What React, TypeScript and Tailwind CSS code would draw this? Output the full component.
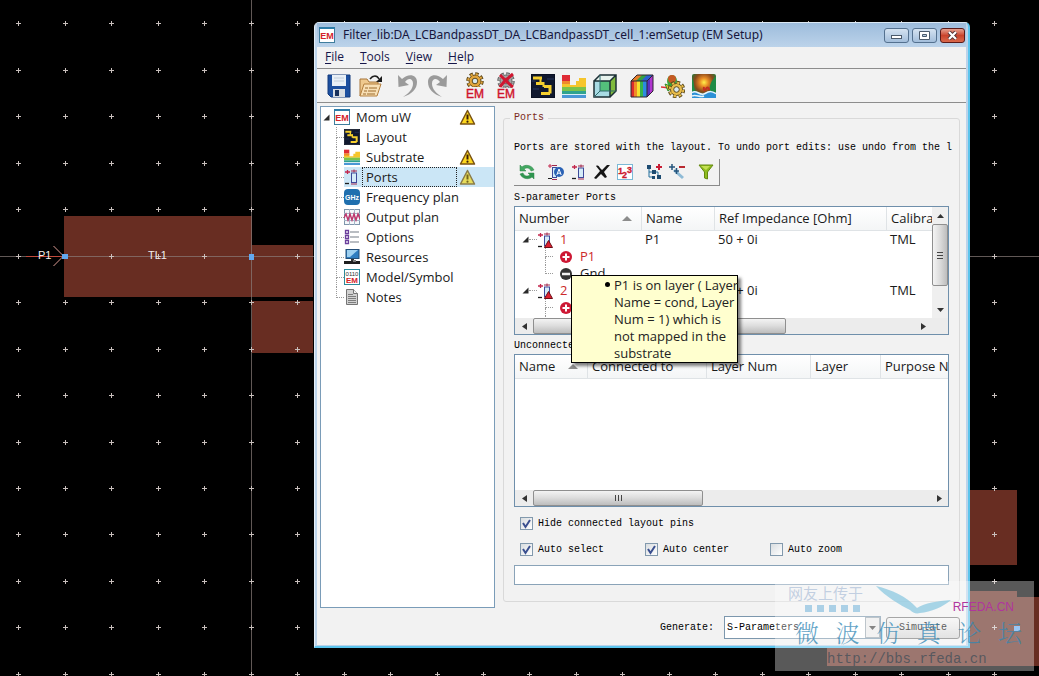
import React, { useState } from 'react';

type IconProps = { className?: string };

const GRID_X = Array.from({ length: 45 }, (_, i) => Math.round(18.2 + i * 46.48));
const GRID_Y = Array.from({ length: 30 }, (_, i) => Math.round(23.2 + i * 46.48));

function LayoutCanvas() {
  return (
    <svg className="absolute inset-0 h-full w-full" shapeRendering="crispEdges">
      <g fill="#682d22">
        <rect x="64" y="216" width="188" height="81" />
        <rect x="252" y="245" width="61" height="52" />
        <rect x="252" y="301" width="61" height="52" />
        <rect x="940" y="490" width="77" height="75" />
        <rect x="940" y="591" width="77" height="10" />
        <rect x="827" y="597" width="212" height="69" />
      </g>
      <g stroke="#8a7d7a" strokeOpacity="0.7">
        <line x1="0" y1="256.5" x2="100%" y2="256.5" />
        <line x1="251.5" y1="0" x2="251.5" y2="100%" />
      </g>
      <path
        d={GRID_Y.map((y) => GRID_X.map((x) => `M${x - 2} ${y}.5h5M${x}.5 ${y - 2}v5`).join('')).join('')}
        stroke="#c9c0bd"
        fill="none"
      />
      <path d="M26 256.5h37" stroke="#c04a3c" />
      <path d="M53.5 246l9 9M53.5 266l9-9" stroke="#dc9b93" fill="none" shapeRendering="auto" />
      <g fill="#62a8f0">
        <rect x="62" y="254" width="6" height="5" />
        <rect x="249" y="254" width="5" height="6" />
        <rect x="1014" y="626" width="6" height="5" />
      </g>
      <g fill="#f3eeee" fontFamily="Liberation Sans, sans-serif" fontSize="11">
        <text x="38" y="259">P1</text>
        <text x="148" y="259">TL1</text>
      </g>
    </svg>
  );
}

/* ---------- icons ---------- */

function EmBadge({ className }: IconProps) {
  return (
    <svg className={className} viewBox="0 0 16 16">
      <rect x="0.5" y="0.5" width="15" height="15" fill="#fff" stroke="#3f7d9d" />
      <rect x="0" y="0" width="16" height="2" fill="#2d7ca8" />
      <text x="8" y="12" fontSize="9" fontWeight="bold" textAnchor="middle" fill="#d3222a" fontFamily="Liberation Sans, sans-serif">EM</text>
    </svg>
  );
}

function SaveIcon({ className }: IconProps) {
  return (
    <svg className={className} viewBox="0 0 24 24">
      <path d="M1 1h22v22H4l-3-3z" fill="#1c4f9f" stroke="#123a7c" />
      <rect x="5" y="1" width="14" height="11" fill="#e9f0f7" />
      <path d="M7 4h10M7 7h10" stroke="#c2cedb" />
      <rect x="6" y="15" width="12" height="8" fill="#d8dde3" />
      <rect x="8" y="16" width="4" height="6" fill="#17305c" />
    </svg>
  );
}

function OpenIcon({ className }: IconProps) {
  return (
    <svg className={className} viewBox="0 0 24 24">
      <path d="M2 22V5h7l2 3h9v3" fill="#efc98e" stroke="#a8763a" />
      <path d="M2 22L6 10h17l-4 12z" fill="#f8dfb4" stroke="#b5803f" />
      <path d="M7 14h3m1 0h8M6 17h3m1 0h8M5 20h3m1 0h8" stroke="#9c6a2d" />
      <path d="M12 5c3-4 7-4 9 0" fill="none" stroke="#1d1d1d" strokeWidth="1.5" />
      <path d="M24 2v6h-6z" fill="#1d1d1d" />
    </svg>
  );
}

function UndoIcon({ className }: IconProps) {
  return (
    <svg className={className} viewBox="0 0 24 24">
      <path d="M3 1l0.500 12L14 11l-4-3c3-4.500 8-4 8 1.500 0 5.500-4 9.500-10 13.500 9-3 14-8 14-15C22 0 13-1 7 5z" fill="#9b9b9b" />
    </svg>
  );
}

function RedoIcon({ className }: IconProps) {
  return (
    <svg className={className} viewBox="0 0 24 24">
      <path d="M21 1l-0.500 12L10 11l4-3c-3-4.500-8-4-8 1.500 0 5.500 4 9.500 10 13.500C7 20 2 15 2 8 2 0 11-1 17 5z" fill="#9b9b9b" />
    </svg>
  );
}

function Gear({ cx, cy, fill, stroke, hub }: { cx: number; cy: number; fill: string; stroke: string; hub: string }) {
  return (
    <g>
      <circle cx={cx} cy={cy} r="6.8" fill="none" stroke={stroke} strokeWidth="4" strokeDasharray="3.2 2.14" />
      <circle cx={cx} cy={cy} r="6" fill={fill} stroke={stroke} />
      <circle cx={cx} cy={cy} r="6.8" fill="none" stroke={fill} strokeWidth="2" strokeDasharray="2.2 3.14" strokeDashoffset="-0.5" />
      <circle cx={cx} cy={cy} r="2.8" fill={hub} stroke={stroke} />
    </g>
  );
}

function SimulateEmIcon({ className }: IconProps) {
  return (
    <svg className={`${className} overflow-visible`} viewBox="0 0 24 24">
      <Gear cx={12} cy={7} fill="#e3a63c" stroke="#5f4a1c" hub="#d5e6ee" />
      <rect x="2" y="13" width="20" height="12" fill="#f2f2f2" />
      <text x="12" y="24" fontSize="12" textAnchor="middle" fill="#d0142c" stroke="#d0142c" strokeWidth="0.4" fontFamily="Liberation Sans, sans-serif">EM</text>
    </svg>
  );
}

function StopEmIcon({ className }: IconProps) {
  return (
    <svg className={`${className} overflow-visible`} viewBox="0 0 24 24">
      <Gear cx={12} cy={7} fill="#a5a5a5" stroke="#666" hub="#ddd" />
      <rect x="2" y="14" width="20" height="11" fill="#f2f2f2" />
      <path d="M6 1c4 4 8 8 13 12M19 0C14 4 9 8 6 13" stroke="#cf1730" strokeWidth="3" fill="none" />
      <text x="12" y="24" fontSize="12" textAnchor="middle" fill="#d0142c" stroke="#d0142c" strokeWidth="0.4" fontFamily="Liberation Sans, sans-serif">EM</text>
    </svg>
  );
}

function LayoutIcon({ className }: IconProps) {
  return (
    <svg className={className} viewBox="0 0 24 24">
      <rect x="0.5" y="0.5" width="23" height="23" fill="#10182e" stroke="#0a1022" />
      <path d="M2 4h9M5 9.500h8M13 12.500h6v7M10 19.500h9" fill="none" stroke="#f5cf2e" strokeWidth="3" />
      <path d="M9.500 4v5M12.500 8v5" fill="none" stroke="#f5cf2e" strokeWidth="2" />
      <path d="M0.500 7h4M16 5h7M2 15h6" stroke="#27365f" />
    </svg>
  );
}

function SubstrateIcon({ className }: IconProps) {
  return (
    <svg className={className} viewBox="0 0 24 24">
      <rect x="0" y="1" width="8" height="6" fill="#df2b35" />
      <path d="M0 7h8v4h6V7h3V4h7v9H0z" fill="#f6c52b" />
      <path d="M0 7h8v3H0z" fill="#f08a2c" />
      <rect x="0" y="13" width="24" height="4" fill="#7cc24a" />
      <rect x="0" y="17" width="24" height="3" fill="#2fa38f" />
      <rect x="0" y="20" width="24" height="1" fill="#dceef6" />
      <rect x="0" y="21" width="24" height="3" fill="#4a97d6" />
    </svg>
  );
}

function CubeIcon({ className }: IconProps) {
  return (
    <svg className={className} viewBox="0 0 24 24">
      <path d="M1 7l6-6h16l-6 6z" fill="#e7f3ee" />
      <path d="M17 7l6-6v16l-6 6z" fill="#7fba3c" />
      <rect x="1" y="7" width="16" height="16" fill="#a8dbe4" />
      <rect x="7" y="7" width="10" height="10" fill="#54c07b" />
      <path d="M1 7h16v16H1zM1 7l6-6h16v16l-6 6M17 7l6-6" fill="none" stroke="#1c2f35" strokeWidth="1.500" />
      <path d="M7 1v16h16M7 17l-6 6" fill="none" stroke="#2f6a6c" />
    </svg>
  );
}

function RainbowCubeIcon({ className }: IconProps) {
  return (
    <svg className={className} viewBox="0 0 24 24">
      <path d="M1 7l6-6h16l-6 6z" fill="#e57e29" />
      <path d="M6 7l6-6h11l-6 6z" fill="#34a042" />
      <path d="M11 7l6-6h6l-6 6z" fill="#2c5fd0" />
      <rect x="1" y="7" width="4" height="16" fill="#de2c2c" />
      <rect x="4" y="7" width="3" height="16" fill="#f18b27" />
      <rect x="7" y="7" width="3" height="16" fill="#f4e22e" />
      <rect x="10" y="7" width="3" height="16" fill="#35b34a" />
      <rect x="13" y="7" width="4" height="16" fill="#2c8ae0" />
      <path d="M17 7l6-6v16l-6 6z" fill="#5a2fc0" />
      <path d="M20 4l3-3v16l-3 3z" fill="#b036cf" />
      <path d="M1 7h16v16H1zM1 7l6-6h16v16l-6 6M17 7l6-6" fill="none" stroke="#2c2430" />
    </svg>
  );
}

function FarFieldIcon({ className }: IconProps) {
  return (
    <svg className={className} viewBox="0 0 24 24">
      <path d="M0 13l9 1" stroke="#d93232" strokeWidth="1.500" />
      <ellipse cx="11" cy="7" rx="5" ry="6" fill="#3aa63a" />
      <ellipse cx="11" cy="5" rx="4" ry="4" fill="#c55a23" />
      <path d="M4 10l8 3-5 4z" fill="#e0c62c" stroke="#2d8c2f" />
      <Gear cx={15.5} cy={15.5} fill="#e9bd4b" stroke="#5d4b1c" hub="#d8e8ef" />
    </svg>
  );
}

function FieldPlotIcon({ className }: IconProps) {
  return (
    <svg className={className} viewBox="0 0 24 24">
      <defs>
        <radialGradient id="field" cx="0.500" cy="0.350" r="0.600">
          <stop offset="0" stopColor="#fff04a" />
          <stop offset="0.300" stopColor="#e88b25" />
          <stop offset="0.650" stopColor="#8c4a1c" />
          <stop offset="1" stopColor="#217a3a" />
        </radialGradient>
      </defs>
      <rect width="24" height="24" rx="2" fill="url(#field)" />
      <path d="M0 4c3 5 1 9 4 14H0zM24 2c-5 5-7 9-6 16h6z" fill="#1f8b46" />
      <path d="M12 13c-1 3 1 4 2 2s3-2 3 1" stroke="#c32d22" strokeWidth="2" fill="none" />
      <path d="M0 18c5-3 8 4 13 1s7-2 11 0v5H0z" fill="#2c90d6" />
      <path d="M0 18.500c5-3 8 4 13 1s7-2 11 0M0 22c4-2 8 2 12 0" stroke="#e8f5fc" strokeWidth="1.500" fill="none" />
    </svg>
  );
}

function WarningIcon({ className, dim }: IconProps & { dim?: boolean }) {
  return (
    <svg className={className} viewBox="0 0 17 17">
      <path d="M8.500 1.500L15.500 15h-14z" fill={dim ? '#e6dc5c' : '#fcd720'} stroke={dim ? '#8a7c4a' : '#7a5313'} strokeWidth="1.500" strokeLinejoin="round" />
      <path d="M8.500 5.500v5" stroke={dim ? '#74661d' : '#3b1e05'} strokeWidth="2" />
      <circle cx="8.500" cy="12.700" r="1.100" fill={dim ? '#74661d' : '#3b1e05'} />
    </svg>
  );
}

function PortIcon({ className, alert }: IconProps & { alert?: boolean }) {
  return (
    <svg className={className} viewBox="0 0 16 16">
      <path d="M1 3h5M3.500 1v4" stroke="#c3274d" strokeWidth="1.300" />
      <path d="M1 14.500h4" stroke="#1d1d1d" strokeWidth="1.300" />
      <rect x="7.500" y="4" width="5" height="9.500" fill="#d5ecf8" stroke="#3f4a9a" />
      <path d="M7 2h6M10 0.500v3M7 15h6" stroke="#a1284c" />
      {alert && <path d="M11.500 8.500l4 7h-8z" fill="#df1f2f" stroke="#6b0f18" />}
    </svg>
  );
}

function GhzIcon({ className }: IconProps) {
  return (
    <svg className={className} viewBox="0 0 16 16">
      <rect width="16" height="16" rx="4" fill="#1f6fae" />
      <text x="8" y="11" fontSize="7" fontWeight="bold" textAnchor="middle" fill="#fff" fontFamily="Liberation Sans, sans-serif">GHz</text>
    </svg>
  );
}

function OutputPlanIcon({ className }: IconProps) {
  return (
    <svg className={className} viewBox="0 0 16 16">
      <rect x="0.500" y="0.500" width="15" height="15" fill="#f4f8fb" stroke="#7f95ab" />
      <path d="M5.500 0v16M10.500 0v16M0 4.500h16M0 11.500h16" stroke="#a4b5c6" />
      <path d="M0 9l2-4 2 6 2-6 2 6 2-6 2 6 2-6 2 5" fill="none" stroke="#c0356c" strokeWidth="1.400" />
    </svg>
  );
}

function OptionsIcon({ className }: IconProps) {
  return (
    <svg className={className} viewBox="0 0 16 16">
      <path d="M1.500 1.500h3v3h-3zM1.500 6.500h3v3h-3zM1.500 11.500h3v3h-3z" fill="#fff" stroke="#6b3f9c" strokeWidth="1.300" />
      <path d="M6 3h9M6 8h9M6 13h9" stroke="#a3a8ae" strokeWidth="1.300" />
    </svg>
  );
}

function ResourcesIcon({ className }: IconProps) {
  return (
    <svg className={className} viewBox="0 0 16 16">
      <rect x="2" y="0.500" width="13" height="9" fill="#2f7dc0" stroke="#234e78" />
      <path d="M3 1h11L6 8H3z" fill="#9fd0f0" />
      <path d="M7 10h3v2H7z" fill="#333" />
      <rect x="0" y="12" width="16" height="3" fill="#1e1e1e" />
      <rect x="9" y="11" width="3" height="2" fill="#777" />
    </svg>
  );
}

function ModelIcon({ className }: IconProps) {
  return (
    <svg className={className} viewBox="0 0 16 16">
      <rect x="0.500" y="0.500" width="15" height="15" fill="#fff" stroke="#2c8a9c" />
      <text x="8" y="7" fontSize="6" textAnchor="middle" fill="#333" fontFamily="Liberation Sans, sans-serif">0110</text>
      <text x="8" y="14" fontSize="8" fontWeight="bold" textAnchor="middle" fill="#d3222a" fontFamily="Liberation Sans, sans-serif">EM</text>
    </svg>
  );
}

function NotesIcon({ className }: IconProps) {
  return (
    <svg className={className} viewBox="0 0 16 16">
      <path d="M2.500 0.500h7l4 4v11h-11z" fill="#d2d2d2" stroke="#757575" />
      <path d="M9.500 0.500v4h4" fill="#f4f4f4" stroke="#757575" />
      <path d="M4 5.500h5M4 7.500h8M4 9.500h8M4 11.500h8M4 13.500h8" stroke="#7d7d7d" />
    </svg>
  );
}

function RefreshIcon({ className }: IconProps) {
  return (
    <svg className={className} viewBox="0 0 16 16">
      <path d="M15 6C13 1 6 0 3 3L1 1v6h6L5 5c3-2 6-1 7 2z" fill="#43a862" stroke="#2c8447" strokeWidth="0.500" />
      <path d="M1 10c2 5 9 6 12 3l2 2V9H9l2 2c-3 2-6 1-7-2z" fill="#2f9650" stroke="#2c8447" strokeWidth="0.500" />
    </svg>
  );
}

function AutoPortIcon({ className }: IconProps) {
  return (
    <svg className={className} viewBox="0 0 16 16">
      <path d="M0 2h4M2 0v4" stroke="#c3274d" />
      <path d="M0 14.500h4" stroke="#222" />
      <rect x="4.500" y="3.500" width="4" height="10" fill="#d5ecf8" stroke="#3f4a9a" />
      <path d="M4 1.500h5M4 15.500h5" stroke="#a1284c" />
      <circle cx="11" cy="8" r="5" fill="#2a62b5" />
      <path d="M8.800 11L11 5l2.200 6M9.500 9.200h3" fill="none" stroke="#fff" />
    </svg>
  );
}

function DeleteIcon({ className }: IconProps) {
  return (
    <svg className={className} viewBox="0 0 16 16">
      <path d="M2 2c2-1 3 0 4 2l2 2 5-5 3 0-6 7 3 5-2 1-4-4-5 5-2-1 6-7z" fill="#151515" />
    </svg>
  );
}

function RenumberIcon({ className }: IconProps) {
  return (
    <svg className={className} viewBox="0 0 16 16">
      <rect x="0.500" y="0.500" width="15" height="15" fill="#fff" stroke="#7bb9d6" />
      <g fill="#cb1a2f" stroke="#cb1a2f" strokeWidth="0.300" fontSize="9" fontWeight="bold" fontFamily="Liberation Sans, sans-serif">
        <text x="1" y="10">1</text>
        <text x="5" y="14">2</text>
        <text x="10" y="9">3</text>
      </g>
    </svg>
  );
}

function AddNodeIcon({ className }: IconProps) {
  return (
    <svg className={className} viewBox="0 0 16 16">
      <path d="M3 3v10h4M3 8h4M9 8h3v5" fill="none" stroke="#236f9c" />
      <path d="M1 1h4v4H1zM6 6h4v4H6zM6 12h3v3H6zM11 11h4v4h-4z" fill="#1d4b71" />
      <path d="M10 3h6M13 0v6" stroke="#c81d35" strokeWidth="2" />
    </svg>
  );
}

function RemoveNodeIcon({ className }: IconProps) {
  return (
    <svg className={className} viewBox="0 0 16 16">
      <path d="M5 6l9 8" stroke="#8fbbd6" strokeWidth="3" />
      <path d="M0 3h6M3 0v6M5 7h5M7.500 4v6" stroke="#25547c" strokeWidth="1.500" />
      <path d="M10 3h6" stroke="#b92a30" strokeWidth="2" />
    </svg>
  );
}

function FilterIcon({ className }: IconProps) {
  return (
    <svg className={className} viewBox="0 0 16 16">
      <path d="M1 1h14L9.500 8v7l-3-1V8z" fill="#8fbc1f" stroke="#64890f" />
      <path d="M3 2h9L8 6z" fill="#c4e052" />
    </svg>
  );
}

function PlusBadge({ className }: IconProps) {
  return (
    <svg className={className} viewBox="0 0 12 12">
      <circle cx="6" cy="6" r="6" fill="#cd1834" />
      <path d="M2.500 6h7M6 2.500v7" stroke="#fff" strokeWidth="2" />
    </svg>
  );
}

function MinusBadge({ className }: IconProps) {
  return (
    <svg className={className} viewBox="0 0 12 12">
      <circle cx="6" cy="6" r="6" fill="#333" />
      <path d="M2 6h8" stroke="#f1f1f1" strokeWidth="2.500" />
    </svg>
  );
}

function Expander() {
  return (
    <svg className="h-[7px] w-[7px] shrink-0" viewBox="0 0 7 7">
      <path d="M6.500 0.500v6h-6z" fill="#2a2a2a" />
    </svg>
  );
}

function SortArrow() {
  return (
    <svg className="h-[5px] w-[10px]" viewBox="0 0 10 5">
      <path d="M0 5l5-5 5 5z" fill="#8c8c8c" />
    </svg>
  );
}

/* ---------- tree ---------- */

const TREE_ITEMS = [
  { label: 'Layout', Icon: LayoutIcon },
  { label: 'Substrate', Icon: SubstrateIcon, warning: true },
  { label: 'Ports', Icon: PortIcon, warning: true },
  { label: 'Frequency plan', Icon: GhzIcon },
  { label: 'Output plan', Icon: OutputPlanIcon },
  { label: 'Options', Icon: OptionsIcon },
  { label: 'Resources', Icon: ResourcesIcon },
  { label: 'Model/Symbol', Icon: ModelIcon },
  { label: 'Notes', Icon: NotesIcon },
];

function Branch({ last }: { last?: boolean }) {
  return (
    <span className="flex w-2 shrink-0 flex-col self-stretch">
      <span className="flex-1 border-b border-l border-dotted border-[#9a9a9a]" />
      <span className={last ? 'flex-1' : 'flex-1 border-l border-dotted border-[#9a9a9a]'} />
    </span>
  );
}

function SetupTree() {
  const [selected, setSelected] = useState('Ports');

  return (
    <nav className="w-[175px] shrink-0 border border-[#7a9cb8] bg-white text-[13px] leading-5 text-[#1a1a1a]">
      <div className="flex h-5 items-center pl-[2px]">
        <Expander />
        <EmBadge className="ml-1 h-4 w-4" />
        <span className="ml-[6px] flex-1">Mom uW</span>
        <WarningIcon className="mr-[18px] h-[17px] w-[17px]" />
      </div>
      <ul>
        {TREE_ITEMS.map(({ label, Icon, warning }, i) => {
          const active = label === selected;
          return (
            <li key={label} className="flex h-5 items-center pl-[15px]">
              <Branch last={i === TREE_ITEMS.length - 1} />
              <button
                type="button"
                onClick={() => setSelected(label)}
                className={`flex h-5 min-w-0 flex-1 items-center text-left ${active ? 'bg-[#cbe6f6]' : ''}`}
              >
                <Icon className="h-4 w-4 shrink-0" />
                <span
                  className={`ml-[2px] w-[95px] border px-[3px] leading-[18px] whitespace-nowrap ${
                    active ? 'border-dotted border-[#222]' : 'border-transparent'
                  }`}
                >
                  {label}
                </span>
                {warning && <WarningIcon dim={active} className="ml-[2px] h-[17px] w-[17px] shrink-0" />}
              </button>
            </li>
          );
        })}
      </ul>
    </nav>
  );
}

/* ---------- scroll bars ---------- */

function HScroll({ thumb }: { thumb: string }) {
  return (
    <div className="flex h-4 w-full items-stretch bg-[#ececec]">
      <button type="button" aria-label="Scroll left" className="flex w-[18px] items-center justify-center">
        <svg className="h-[7px] w-[5px]" viewBox="0 0 5 7"><path d="M5 0v7L0 3.500z" fill="#333" /></svg>
      </button>
      <div className="flex flex-1">
        <div className={`flex items-center justify-center gap-[2px] rounded-[2px] border border-[#8f8f8f] bg-linear-to-b from-[#f4f4f4] via-[#dcdcdc] to-[#bdbdbd] ${thumb}`}>
          <span className="h-[6px] w-px bg-[#444]" />
          <span className="h-[6px] w-px bg-[#444]" />
          <span className="h-[6px] w-px bg-[#444]" />
        </div>
      </div>
      <button type="button" aria-label="Scroll right" className="flex w-[18px] items-center justify-center">
        <svg className="h-[7px] w-[5px]" viewBox="0 0 5 7"><path d="M0 0v7l5-3.500z" fill="#333" /></svg>
      </button>
    </div>
  );
}

function VScroll() {
  return (
    <div className="flex w-4 shrink-0 flex-col bg-[#efefef]">
      <button type="button" aria-label="Scroll up" className="flex h-[17px] items-center justify-center">
        <svg className="h-1 w-[7px]" viewBox="0 0 7 4"><path d="M0 4h7L3.500 0z" fill="#333" /></svg>
      </button>
      <div className="flex-1">
        <div className="flex h-[62px] flex-col items-center justify-center gap-[2px] rounded-[2px] border border-[#8f8f8f] bg-linear-to-r from-[#f4f4f4] via-[#dcdcdc] to-[#bdbdbd]">
          <span className="h-px w-[6px] bg-[#444]" />
          <span className="h-px w-[6px] bg-[#444]" />
          <span className="h-px w-[6px] bg-[#444]" />
        </div>
      </div>
      <button type="button" aria-label="Scroll down" className="flex h-[17px] items-center justify-center">
        <svg className="h-1 w-[7px]" viewBox="0 0 7 4"><path d="M0 0h7L3.500 4z" fill="#333" /></svg>
      </button>
    </div>
  );
}

/* ---------- tables ---------- */

const UI_FONT = "font-['Open_Sans','Noto_Sans',sans-serif]";
const HEAD_CELL = 'border-r border-b border-[#dfe3e6] px-1 text-left font-normal whitespace-nowrap';

function PortRow({ number, name }: { number: string; name: string }) {
  return (
    <>
      <tr className="h-[17px]">
        <td className="p-0">
          <div className="flex h-[17px] items-center pl-[7px]">
            <Expander />
            <span className="w-2 border-t border-dotted border-[#9a9a9a]" />
            <PortIcon alert className="h-4 w-4" />
            <span className="ml-[7px] text-[#cc2a2a]">{number}</span>
          </div>
        </td>
        <td className="px-[3px] py-0">{name}</td>
        <td className="px-[3px] py-0">50 + 0i</td>
        <td className="px-[3px] py-0">TML</td>
      </tr>
      <tr className="h-[17px]">
        <td className="p-0" colSpan={4}>
          <div className="flex h-[17px] items-center pl-[30px]">
            <Branch />
            <PlusBadge className="ml-[7px] h-3 w-3" />
            <span className="ml-2 text-[#cc2a2a]">{name}</span>
          </div>
        </td>
      </tr>
      <tr className="h-[17px]">
        <td className="p-0" colSpan={4}>
          <div className="flex h-[17px] items-center pl-[30px]">
            <Branch last />
            <MinusBadge className="ml-[7px] h-3 w-3" />
            <span className="ml-2">Gnd</span>
          </div>
        </td>
      </tr>
    </>
  );
}

function PortsTable() {
  return (
    <div className={`relative ${UI_FONT}`}>
      <div className="border border-[#6f8fab] bg-white text-[13px] leading-[17px] text-[#1a1a1a]">
        <div className="flex h-[111px]">
          <div className="min-w-0 flex-1 overflow-hidden">
            <table className="w-[520px] table-fixed border-separate border-spacing-0">
              <colgroup>
                <col className="w-[127px]" />
                <col className="w-[73px]" />
                <col className="w-[172px]" />
                <col />
              </colgroup>
              <thead>
                <tr className="h-6 bg-linear-to-b from-white to-[#f3f5f6]">
                  <th className={HEAD_CELL}>
                    <span className="flex items-center justify-between pr-[5px]">Number <SortArrow /></span>
                  </th>
                  <th className={HEAD_CELL}>Name</th>
                  <th className={HEAD_CELL}>Ref Impedance [Ohm]</th>
                  <th className={HEAD_CELL}>Calibration</th>
                </tr>
              </thead>
              <tbody>
                <PortRow number="1" name="P1" />
                <PortRow number="2" name="P2" />
              </tbody>
            </table>
          </div>
          <VScroll />
        </div>
        <div className="bg-[#ececec] pr-4">
          <HScroll thumb="w-[253px]" />
        </div>
      </div>
      <div
        role="tooltip"
        className="absolute top-[69px] left-[57px] z-10 w-[167px] border border-black bg-[#ffffcf] pt-px pl-[42px] text-[13px] leading-[17px] whitespace-nowrap text-[#222] shadow-[3px_3px_3px_rgba(0,0,0,0.5)]"
      >
        <span className="absolute top-[6px] left-[33px] h-[5px] w-[5px] rounded-full bg-black" />
        P1 is on layer ( Layer
        <br />
        Name = cond, Layer
        <br />
        Num = 1) which is
        <br />
        not mapped in the
        <br />
        substrate
      </div>
    </div>
  );
}

function PinsTable() {
  return (
    <div className={`border border-[#6f8fab] bg-white text-[13px] leading-[17px] text-[#1a1a1a] ${UI_FONT}`}>
      <div className="h-[135px] overflow-hidden">
        <table className="w-[520px] table-fixed border-separate border-spacing-0">
          <colgroup>
            <col className="w-[73px]" />
            <col className="w-[119px]" />
            <col className="w-[104px]" />
            <col className="w-[70px]" />
            <col />
          </colgroup>
          <thead>
            <tr className="h-6 bg-linear-to-b from-white to-[#f3f5f6]">
              <th className={HEAD_CELL}>
                <span className="flex items-center justify-between pr-[5px]">Name <SortArrow /></span>
              </th>
              <th className={HEAD_CELL}>Connected to</th>
              <th className={HEAD_CELL}>Layer Num</th>
              <th className={HEAD_CELL}>Layer</th>
              <th className={HEAD_CELL}>Purpose Num</th>
            </tr>
          </thead>
          <tbody />
        </table>
      </div>
      <HScroll thumb="w-[170px]" />
    </div>
  );
}

/* ---------- form pieces ---------- */

function Check({ label, defaultChecked, className }: { label: string; defaultChecked?: boolean; className?: string }) {
  const [checked, setChecked] = useState(!!defaultChecked);
  return (
    <label className={`flex h-[14px] items-center gap-[5px] whitespace-nowrap ${className ?? ''}`}>
      <span className="grid h-[13px] w-[13px]">
        <input
          type="checkbox"
          checked={checked}
          onChange={(e) => setChecked(e.target.checked)}
          className="col-start-1 row-start-1 m-0 h-[13px] w-[13px] appearance-none border border-[#8299ad] bg-linear-to-br from-[#d9dde0] to-white"
        />
        {checked && (
          <svg className="pointer-events-none col-start-1 row-start-1 h-[13px] w-[13px]" viewBox="0 0 13 13">
            <path d="M3 6l2.500 4L10 3" fill="none" stroke="#3a4f8f" strokeWidth="2" />
          </svg>
        )}
      </span>
      {label}
    </label>
  );
}

const PORT_TOOLS = [
  [{ name: 'Refresh', Icon: RefreshIcon }],
  [
    { name: 'Create ports automatically', Icon: AutoPortIcon },
    { name: 'New port', Icon: PortIcon },
    { name: 'Delete', Icon: DeleteIcon },
    { name: 'Renumber', Icon: RenumberIcon },
  ],
  [
    { name: 'Add pin', Icon: AddNodeIcon },
    { name: 'Remove pin', Icon: RemoveNodeIcon },
  ],
  [{ name: 'Filter', Icon: FilterIcon }],
];

function PortsPanel() {
  return (
    <fieldset className="min-w-0 rounded-[3px] border border-[#d9d9d9] px-[10px] pb-4">
      <legend className="-ml-1 px-1 leading-4 text-[#7c2c1c]">Ports</legend>
      <p className="mt-[15px] -mr-1 overflow-hidden leading-[14px] whitespace-nowrap">
        Ports are stored with the layout. To undo port edits: use undo from the l
      </p>
      <div className="mt-1 flex h-[27px] w-[206px] items-center gap-[13px] border-r border-b border-[#8a8a8a] pl-[5px]">
        {PORT_TOOLS.map((group, i) => (
          <div key={i} className="flex gap-[7px]">
            {group.map(({ name, Icon }) => (
              <button key={name} type="button" aria-label={name}>
                <Icon className="h-4 w-4" />
              </button>
            ))}
          </div>
        ))}
      </div>
      <p className="mt-[5px] mb-px leading-[14px]">S-parameter Ports</p>
      <PortsTable />
      <p className="mt-1 mb-px leading-[14px]">Unconnected Layout Pins</p>
      <PinsTable />
      <div className="mt-[9px] flex flex-col gap-3 pl-[6px]">
        <Check label="Hide connected layout pins" defaultChecked />
        <div className="flex">
          <Check label="Auto select" defaultChecked className="w-[125px]" />
          <Check label="Auto center" defaultChecked className="w-[125px]" />
          <Check label="Auto zoom" />
        </div>
      </div>
      <input type="text" aria-label="Status" className="mt-[9px] block h-5 w-full border border-[#8aa3b8] bg-white px-1" />
    </fieldset>
  );
}

/* ---------- window ---------- */

const TOOLS = [
  [
    { name: 'Save', Icon: SaveIcon },
    { name: 'Open', Icon: OpenIcon },
  ],
  [
    { name: 'Undo', Icon: UndoIcon },
    { name: 'Redo', Icon: RedoIcon },
  ],
  [
    { name: 'Simulate', Icon: SimulateEmIcon },
    { name: 'Stop', Icon: StopEmIcon },
  ],
  [
    { name: 'Layout', Icon: LayoutIcon },
    { name: 'Substrate', Icon: SubstrateIcon },
    { name: '3D view', Icon: CubeIcon },
  ],
  [
    { name: 'Visualization', Icon: RainbowCubeIcon },
    { name: 'Far field', Icon: FarFieldIcon },
    { name: 'Field plot', Icon: FieldPlotIcon },
  ],
];

const CAPTION_BUTTON = 'flex h-[15px] w-[25px] items-center justify-center rounded-[3px] border';

function TitleBar() {
  return (
    <header className="flex h-6 items-center bg-linear-to-b from-[#9dbcdc] to-[#bcd3ea] pr-px pl-[2px] font-['Noto_Sans',sans-serif]">
      <EmBadge className="h-4 w-4" />
      <h1 className="ml-2 flex-1 overflow-hidden text-[12px] leading-5 whitespace-nowrap text-[#16163c]">
        Filter_lib:DA_LCBandpassDT_DA_LCBandpassDT_cell_1:emSetup (EM Setup)
      </h1>
      <div className="flex gap-[3px]">
        <button type="button" aria-label="Minimize" className={`${CAPTION_BUTTON} border-[#54718f] bg-linear-to-b from-[#d5e3f1] to-[#a3bedb]`}>
          <svg className="h-[9px] w-[13px]" viewBox="0 0 13 9"><rect x="1.500" y="4.500" width="10" height="3" fill="#fff" stroke="#4b5a6b" /></svg>
        </button>
        <button type="button" aria-label="Maximize" className={`${CAPTION_BUTTON} border-[#54718f] bg-linear-to-b from-[#d5e3f1] to-[#a3bedb]`}>
          <svg className="h-[9px] w-[13px]" viewBox="0 0 13 9"><path d="M1.500 0.500h10v8h-10z" fill="#fff" stroke="#4b5a6b" /><path d="M4.500 3.500h4v2h-4z" fill="#b4cbe2" stroke="#4b5a6b" /></svg>
        </button>
        <button type="button" aria-label="Close" className={`${CAPTION_BUTTON} border-[#5b1a18] bg-linear-to-b from-[#e5a090] via-[#c9432c] to-[#d9694c]`}>
          <svg className="h-[9px] w-[13px]" viewBox="0 0 13 9"><path d="M3 1l7 7M10 1L3 8" stroke="#503034" strokeWidth="4" /><path d="M3 1l7 7M10 1L3 8" stroke="#fff" strokeWidth="2.200" /></svg>
        </button>
      </div>
    </header>
  );
}

function EmSetupWindow() {
  return (
    <section className="absolute top-[22px] right-[69px] left-[314px] rounded-t-[5px] border-t border-r-2 border-b-2 border-l border-t-[#dbe8f4] border-r-[#5cc4ec] border-b-[#5cc4ec] border-l-[#e6eff7] bg-[#bcd3ea] px-[2px] pb-px font-['Open_Sans','Noto_Sans',sans-serif]">
      <TitleBar />
      <div className="bg-[#f2f2f2]">
        <nav className="flex h-[22px] items-center gap-4 border-b border-[#8d8d8d] pb-[2px] pl-2 text-[12px] leading-5 text-[#16164a]">
          {['File', 'Tools', 'View', 'Help'].map((item) => (
            <button key={item} type="button">
              <span className="underline underline-offset-2">{item[0]}</span>
              {item.slice(1)}
            </button>
          ))}
        </nav>
        <div className="flex h-[34px] items-center gap-[13px] border-b border-[#8d8d8d] pl-[10px]">
          {TOOLS.map((group, i) => (
            <div key={i} className="flex gap-[7px]">
              {group.map(({ name, Icon }) => (
                <button key={name} type="button" aria-label={name}>
                  <Icon className="h-6 w-6" />
                </button>
              ))}
            </div>
          ))}
        </div>
        <main className="flex pb-[6px] pl-[3px] font-['Liberation_Mono',monospace] text-[10px] text-black">
          <div className={`mt-[3px] mb-[31px] flex ${UI_FONT}`}>
            <SetupTree />
          </div>
          <div className="min-w-0 flex-1 pt-[7px] pr-[6px] pl-2">
            <PortsPanel />
            <div className="mt-[14px] flex items-center justify-end">
              <label htmlFor="generate" className="mr-[10px]">Generate:</label>
              <div className="grid h-[23px] w-[157px] border border-[#7c97ad] bg-white">
                <select id="generate" className="col-start-1 row-start-1 appearance-none bg-transparent pl-[2px]">
                  <option>S-Parameters</option>
                </select>
                <span className="pointer-events-none col-start-1 row-start-1 flex w-[15px] items-center justify-center justify-self-end border border-[#9aa6b0] bg-[#ececec]">
                  <svg className="h-1 w-[7px]" viewBox="0 0 7 4"><path d="M0 0h7L3.500 4z" fill="#444" /></svg>
                </span>
              </div>
              <button type="button" className="ml-[5px] h-[22px] w-[74px] rounded-[3px] border border-[#777] bg-linear-to-b from-[#f4f4f4] to-[#d4d4d4]">
                Simulate
              </button>
            </div>
          </div>
        </main>
      </div>
    </section>
  );
}

function Watermark() {
  return (
    <div className="pointer-events-none absolute top-[581px] right-[5px] z-20 flex h-[90px] w-[259px] flex-col bg-white/35 font-['Noto_Sans_CJK_SC',sans-serif]">
      <div className="flex h-[38px] justify-between pr-5 pl-[13px]">
        <div className="flex flex-col text-[15px] leading-6 text-[#8fa9cc]/50">
          网友上传于
          <span className="ml-[17px] flex gap-[5px]">
            {[0, 1, 2, 3, 4].map((n) => (
              <span key={n} className="h-[7px] w-[7px] bg-[#79b8dc]/60" />
            ))}
          </span>
        </div>
        <svg className="-mr-3 h-[34px] w-[76px]" viewBox="0 0 76 34">
          <path d="M0 5c16 4 30 10 41 22 8-5 20-7 34-8-8 7-20 12-31 13-4 1-7 0-10-3C24 24 10 16 0 5z" fill="#8cc8e0" fillOpacity="0.750" />
        </svg>
        <span className="mt-[18px] font-['Liberation_Sans',sans-serif] text-[12px] leading-4 text-[#b0359e]">RFEDA.CN</span>
      </div>
      <div className="flex justify-between pr-[12px] pl-5 font-['Noto_Serif_CJK_SC','Noto_Sans_CJK_SC',serif] text-[24px] leading-[30px] font-light text-[#2f86b4]/75">
        {['微', '波', '仿', '真', '论', '坛'].map((c) => (
          <span key={c}>{c}</span>
        ))}
      </div>
      <p className="pl-[52px] font-['Liberation_Mono',monospace] text-[14px] leading-6 text-[#46505a]/80">http://bbs.rfeda.cn</p>
    </div>
  );
}

export default function App() {
  return (
    <div className="relative min-h-screen overflow-hidden bg-black">
      <LayoutCanvas />
      <EmSetupWindow />
      <Watermark />
    </div>
  );
}
